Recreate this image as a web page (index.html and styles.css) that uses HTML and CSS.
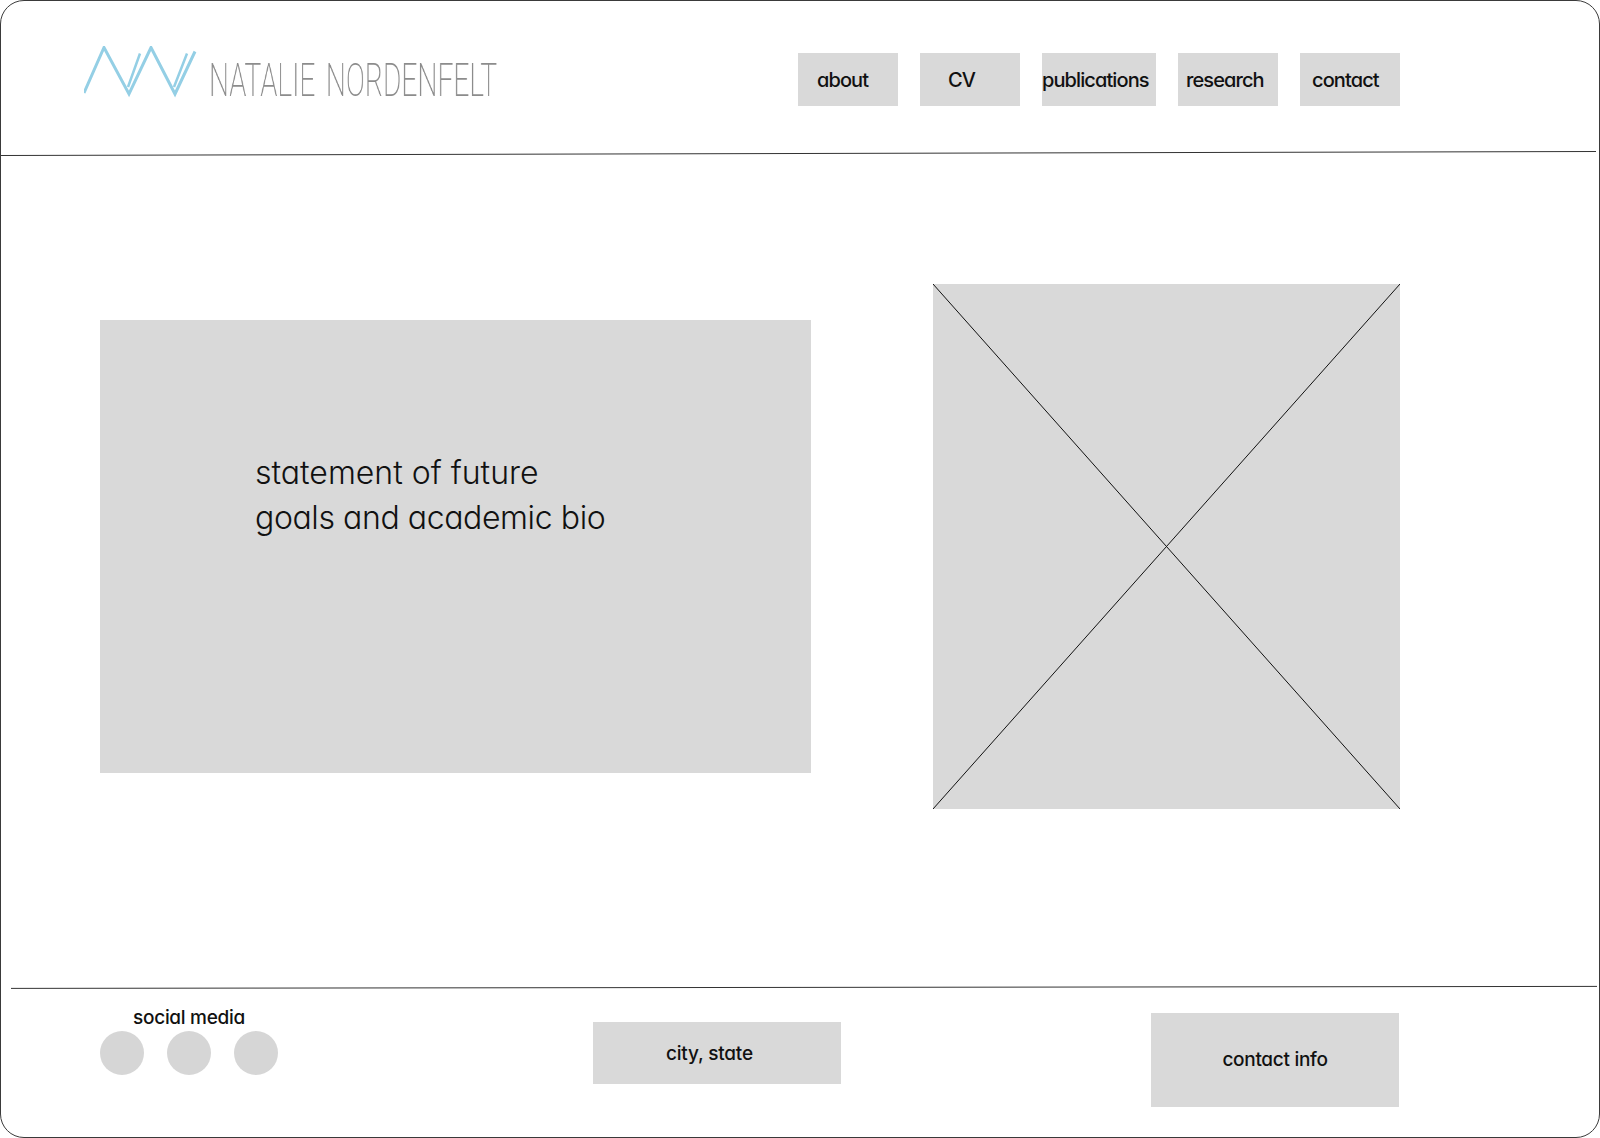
FILE: index.html
```html
<!DOCTYPE html>
<html lang="en">
<head>
<meta charset="utf-8">
<title>Natalie Nordenfelt</title>
<link rel="stylesheet" href="styles.css">
</head>
<body>
<div class="frame">
  <header class="header">
    <div class="brand">
      <svg class="logo" width="116" height="52" viewBox="0 0 116 52" aria-hidden="true">
        <path d="M0 47 L20 1.500 L45 48 L67 1.500 L91 48 L111 5.500" />
        <path d="M44 41 L56 7.500 M90 41 L103 7.500" class="logo-thin" />
      </svg>
      <span class="brand-name">NATALIE NORDENFELT</span>
    </div>
    <nav class="nav">
      <a class="nav-item about">about</a>
      <a class="nav-item cv">CV</a>
      <a class="nav-item publications">publications</a>
      <a class="nav-item research">research</a>
      <a class="nav-item contact">contact</a>
    </nav>
  </header>
  <svg class="rule rule-top" viewBox="0 0 1595 5" preserveAspectRatio="none" aria-hidden="true"><line x1="0" y1="4.500" x2="1595" y2="0.500" /></svg>
  <main class="main">
    <section class="statement">
      <p class="statement-text"><span class="line-one">statement of future</span><span class="line-two">goals and academic bio</span></p>
    </section>
    <svg class="placeholder" viewBox="0 0 467 525" preserveAspectRatio="none" aria-hidden="true">
      <line x1="0" y1="0" x2="467" y2="525" />
      <line x1="467" y1="0" x2="0" y2="525" />
    </svg>
  </main>
  <svg class="rule rule-bottom" viewBox="0 0 1586 4" preserveAspectRatio="none" aria-hidden="true"><line x1="0" y1="2.400" x2="1586" y2="0.400" /></svg>
  <footer class="footer">
    <div class="social">
      <div class="social-label">social media</div>
      <div class="social-icons">
        <span class="circle"></span>
        <span class="circle"></span>
        <span class="circle"></span>
      </div>
    </div>
    <div class="city"><span>city, state</span></div>
    <div class="contact-info">contact info</div>
  </footer>
</div>
</body>
</html>
```
FILE: styles.css
```css
* { box-sizing: border-box; }
html, body { margin: 0; padding: 0; background: #fff; }
body {
  font-family: Inter, "Noto Sans", sans-serif;
  font-feature-settings: "cv11" 1;
  color: #111;
}
.frame {
  width: 1600px;
  height: 1138px;
  border: 1px solid #3a3a3a;
  border-radius: 24px;
  display: flex;
  flex-direction: column;
  overflow: hidden;
}
.header {
  height: 150px;
  flex: none;
  display: flex;
  align-items: flex-start;
  padding-left: 83px;
}
.brand {
  display: flex;
  align-items: flex-start;
  width: 714px;
  padding-top: 45px;
}
.logo { display: block; flex: none; fill: none; stroke: #94cfe5; stroke-width: 3; }
.logo-thin { stroke-width: 2.500; }
.brand-name {
  margin-left: 9px;
  margin-top: 7px;
  font-family: Roboto, sans-serif;
  font-weight: 200;
  font-size: 46px;
  line-height: 54px;
  color: #8c8c8c;
  white-space: nowrap;
  word-spacing: 6px;
  transform: scaleX(0.612);
  transform-origin: left top;
  will-change: transform;
  font-feature-settings: normal;
}
.nav {
  display: flex;
  gap: 22px;
  padding-top: 52px;
}
.nav-item {
  height: 53px;
  width: 100px;
  background: #d9d9d9;
  font-size: 20px;
  font-weight: 450;
  line-height: 55px;
  letter-spacing: -0.9px;
  white-space: nowrap;
}
.about { padding-left: 19px; }
.cv { padding-left: 28px; }
.publications { width: 114px; padding-left: 0; }
.research { padding-left: 8px; }
.contact { padding-left: 12px; }
.rule { display: block; flex: none; overflow: visible; }
.rule line { stroke: #333; stroke-width: 1; vector-effect: non-scaling-stroke; }
.rule-top { width: 1595px; height: 5px; }
.rule-bottom { width: 1586px; height: 4px; margin-left: 10px; }
.main {
  height: 830px;
  flex: none;
  display: flex;
  align-items: flex-start;
  gap: 122px;
  padding: 128px 0 0 99px;
}
.statement {
  width: 711px;
  height: 453px;
  margin-top: 36px;
  background: #d9d9d9;
  padding: 130px 0 0 155px;
}
.statement-text {
  margin: 0;
  font-size: 32px;
  line-height: 45px;
  font-weight: 300;
  white-space: nowrap;
}
.line-one { display: block; letter-spacing: 0; }
.line-two { display: block; letter-spacing: -0.4px; }
.placeholder { display: block; flex: none; width: 467px; height: 525px; background: #d9d9d9; }
.placeholder line { stroke: #111; stroke-width: 1; }
.footer {
  display: flex;
  align-items: flex-start;
  padding-left: 99px;
}
.social { width: 178px; margin-top: 15px; }
.social-label {
  text-align: center;
  font-size: 19px;
  font-weight: 450;
  line-height: 25px;
  letter-spacing: -0.3px;
}
.social-icons { display: flex; gap: 23px; margin-top: 1px; }
.circle { width: 44px; height: 44px; border-radius: 50%; background: #d6d6d6; }
.city {
  width: 248px;
  height: 62px;
  margin: 32px 0 0 315px;
  padding-left: 73px;
  background: #d9d9d9;
  font-size: 19px;
  font-weight: 450;
  line-height: 63px;
  letter-spacing: -0.2px;
}
.contact-info {
  width: 248px;
  height: 94px;
  margin: 23px 0 0 310px;
  background: #d9d9d9;
  text-align: center;
  font-size: 19px;
  font-weight: 450;
  line-height: 94px;
  letter-spacing: -0.3px;
}
```
